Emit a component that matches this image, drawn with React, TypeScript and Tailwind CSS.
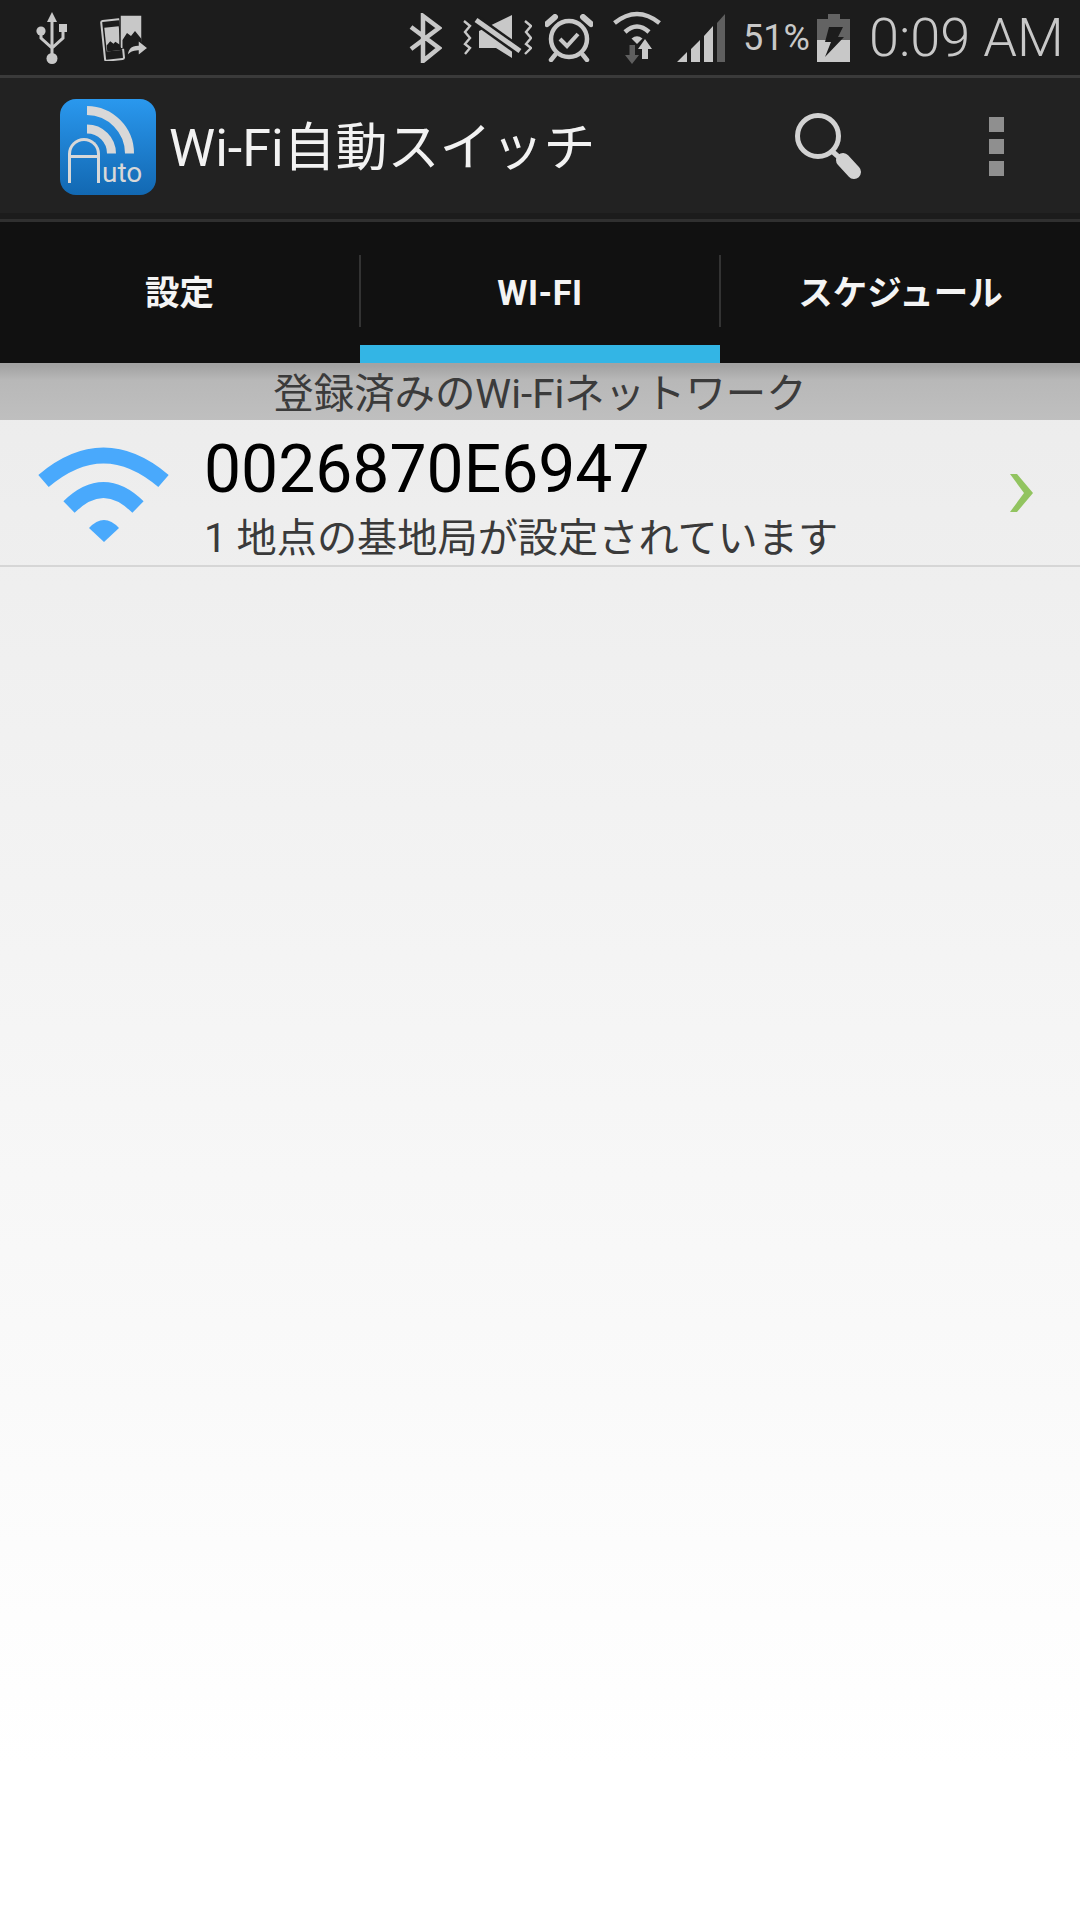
import React from "react";

// Android status bar glyphs
const UsbIcon = () => (
  <svg width="31" height="52" viewBox="0 0 31 52" fill="none">
    <path d="M16 0 L21 10 H11 Z" fill="#c8c8c8" />
    <path d="M16 9 V46 M5 19 V26 L16 36 L27 26 V19" stroke="#c8c8c8" strokeWidth="3" />
    <circle cx="16" cy="46.5" r="5.5" fill="#c8c8c8" />
    <circle cx="5" cy="19" r="4.6" fill="#c8c8c8" />
    <rect x="23" y="12" width="8" height="8" fill="#c8c8c8" />
  </svg>
);

const GalleryShareIcon = () => (
  <svg width="49" height="46" viewBox="0 0 49 46" fill="none">
    <g transform="rotate(-6 12 24)">
      <rect x="3" y="5" width="19" height="40" rx="1.5" stroke="#c8c8c8" strokeWidth="2" />
      <rect x="5.5" y="12" width="14.5" height="24" fill="#c8c8c8" />
      <path d="M6 30 L10 26 L13 29 L15 27 L20 31 V36 H6 Z" fill="#1c1c1c" />
    </g>
    <rect x="20" y="0" width="22" height="33" fill="#c8c8c8" stroke="#1c1c1c" strokeWidth="1.5" />
    <path d="M21 6 V33 H30 V25 H25 Z" fill="#c8c8c8" />
    <path d="M22.5 25 L27 18 L31 21 L35 16 L41.5 24 V33 H22.5 Z" fill="#1c1c1c" />
    <path
      d="M27 42 C27 33 32 30 38 30 V25 L48 33 L38 41 V36 C33 36 30 37 27 42 Z"
      fill="#c8c8c8"
      stroke="#1c1c1c"
      strokeWidth="1.5"
    />
  </svg>
);

const BluetoothIcon = () => (
  <svg width="34" height="50" viewBox="0 0 34 50" fill="none">
    <path d="M3 14 L31 35 L15 48 V3 L31 15 L3 36" stroke="#c8c8c8" strokeWidth="4.5" />
  </svg>
);

const VibrateOffIcon = () => (
  <svg width="69" height="47" viewBox="0 0 69 47" fill="none">
    <path d="M1 7 L7 12 L2 18 L7 24 L2 30 L7 34 L2 40" stroke="#c8c8c8" strokeWidth="2.4" />
    <path d="M62 7 L68 12 L63 18 L68 24 L63 30 L68 34 L62 40" stroke="#c8c8c8" strokeWidth="2.4" />
    <path d="M16 17 L49 1 V44 L33 34 H16 Z" fill="#c8c8c8" />
    <path d="M12 5 L58 38" stroke="#1c1c1c" strokeWidth="10" />
    <path d="M13 6 L57 37" stroke="#c8c8c8" strokeWidth="5" />
  </svg>
);

const AlarmIcon = () => (
  <svg width="48" height="48" viewBox="0 0 48 48" fill="none">
    <circle cx="24" cy="25" r="18" stroke="#c8c8c8" strokeWidth="4.5" />
    <path d="M15 25 L22 32 L33 20" stroke="#c8c8c8" strokeWidth="4" />
    <path d="M2 10 L10 3 M38 3 L46 10" stroke="#c8c8c8" strokeWidth="6" strokeLinecap="round" />
    <path d="M10 41 L6 46 M38 41 L42 46" stroke="#c8c8c8" strokeWidth="4.5" strokeLinecap="round" />
  </svg>
);

const WifiStatusIcon = () => (
  <svg width="50" height="53" viewBox="0 0 50 53" fill="none">
    <path d="M2.5 12 Q25 -6 47.5 12" stroke="#c8c8c8" strokeWidth="4.5" />
    <path d="M13 21 Q25 10 37 21" stroke="#c8c8c8" strokeWidth="4.5" />
    <path d="M19.5 27.5 Q25 23 30.5 27.5 L25 33 Z" fill="#c8c8c8" />
    <path d="M17.5 34 H23 V44 H27 L20 53 L13 44 H17.5 Z" fill="#5f5f5f" />
    <path d="M33 28 L40 38 H36 V48 H30 V38 H26 Z" fill="#c8c8c8" />
  </svg>
);

const SignalIcon = () => (
  <svg width="48" height="48" viewBox="0 0 48 48">
    <path d="M0 48 L10 38 V48 Z M14 48 V35 L23 26 V48 Z M27 48 V22 L36 12 V48 Z" fill="#c8c8c8" />
    <path d="M40 48 V9 L48 0 V48 Z" fill="#5f5f5f" />
  </svg>
);

const BatteryIcon = () => (
  <svg width="33" height="48" viewBox="0 0 33 48">
    <rect x="11" y="0" width="12" height="5" fill="#636363" />
    <rect x="0" y="5" width="33" height="21" fill="#636363" />
    <rect x="0" y="26" width="33" height="22" fill="#c8c8c8" />
    <path d="M12 13 H26 L21 23 H27 L8 43 L14 28 H8 Z" fill="#1c1c1c" />
  </svg>
);

// Launcher icon: signal arcs over an arch-shaped initial
const AppIcon = () => (
  <div
    role="img"
    aria-label="Auto"
    className="relative w-[96px] h-[96px] shrink-0 rounded-[16px] bg-linear-to-b from-[#2a98ee] to-[#1268b2] overflow-hidden"
  >
    <svg className="absolute inset-0" width="96" height="96" viewBox="0 0 96 96" fill="none">
      <path d="M27 11.5 A43 43 0 0 1 69.5 54.5" stroke="#d8d8d8" strokeWidth="9" />
      <path d="M27 30 A24.5 24.5 0 0 1 51.5 54.5" stroke="#d8d8d8" strokeWidth="9" />
    </svg>
    <div className="absolute left-[8px] top-[39px] w-[32px] h-[45px] rounded-t-[16px] border-x-[3px] border-t-[3px] border-[#d8d8d8]">
      <div className="mt-[14px] h-[3px] bg-[#d8d8d8]" />
    </div>
    <span className="absolute left-[42px] top-[56px] text-[28px] leading-[36px] text-[#d8d8d8]">uto</span>
  </div>
);

const SearchIcon = () => (
  <svg width="66" height="67" viewBox="0 0 66 67" fill="none">
    <circle cx="23" cy="24" r="20.5" stroke="#d2d2d2" strokeWidth="5" />
    <path d="M38 40 L46 47" stroke="#d2d2d2" strokeWidth="5" />
    <path d="M48 48 L59 60" stroke="#d2d2d2" strokeWidth="14" strokeLinecap="round" />
  </svg>
);

const WifiListIcon = () => (
  <svg className="blur-[0.7px]" width="131" height="95" viewBox="0 0 131 95" fill="none">
    <path d="M5.5 34 Q65.5 -17 125.5 34" stroke="#49a9fc" strokeWidth="16" />
    <path d="M31 60 Q65.5 26 100 60" stroke="#49a9fc" strokeWidth="16" />
    <path d="M51 81 Q66 65 81 81 L66 95 Z" fill="#49a9fc" />
  </svg>
);

const ChevronIcon = () => (
  <svg width="24" height="38" viewBox="0 0 24 38">
    <path d="M1 0 H8 L24 19 L8 38 H1 L15 19 Z" fill="#92c460" />
  </svg>
);

const TabDivider = () => <div className="w-[2px] h-[72px] mt-[33px] bg-[#333333] shrink-0" />;

export default function App() {
  return (
    <div className="w-[1080px] h-[1920px] flex flex-col overflow-hidden font-['Roboto','Noto_Sans_CJK_JP',sans-serif]">
      {/* Status bar */}
      <div className="h-[75px] bg-[#1c1c1c] flex items-center text-[#c8c8c8] shrink-0">
        <div className="ml-[36px]"><UsbIcon /></div>
        <div className="ml-[33px]"><GalleryShareIcon /></div>
        <div className="ml-[259px]"><BluetoothIcon /></div>
        <div className="ml-[21px]"><VibrateOffIcon /></div>
        <div className="ml-[13px]"><AlarmIcon /></div>
        <div className="ml-[19px]"><WifiStatusIcon /></div>
        <div className="ml-[15px]"><SignalIcon /></div>
        <span className="ml-[18px] text-[36px] leading-none w-[68px]">51%</span>
        <div className="ml-[6px]"><BatteryIcon /></div>
        <span className="ml-[19px] text-[54px] leading-none font-light whitespace-nowrap">0:09 AM</span>
      </div>
      <div className="h-[3px] bg-[#3a3a3a] shrink-0" />

      {/* Action bar */}
      <div className="h-[135px] bg-[#222222] flex items-center shrink-0">
        <div className="ml-[60px] mt-[2px]"><AppIcon /></div>
        <span className="ml-[13px] pt-[6px] text-[52px] leading-none text-[#f2f2f2] whitespace-nowrap">Wi-Fi自動スイッチ</span>
        <div className="ml-auto"><SearchIcon /></div>
        <div className="ml-[128px] mr-[76px] mt-[2px] flex flex-col gap-[7px]">
          <div className="w-[15px] h-[15px] bg-[#8f8f8f]" />
          <div className="w-[15px] h-[15px] bg-[#8f8f8f]" />
          <div className="w-[15px] h-[15px] bg-[#8f8f8f]" />
        </div>
      </div>
      <div className="h-[6px] bg-[#1c1c1c] shrink-0" />
      <div className="h-[3px] bg-[#303030] shrink-0" />

      {/* Tabs */}
      <div className="h-[141px] bg-[#111111] flex shrink-0 text-[#f4f4f4] text-[34.5px] font-bold">
        <div className="w-[359px] h-full pt-[2px] flex items-center justify-center">設定</div>
        <TabDivider />
        <div className="relative w-[358px] h-full pt-[2px] flex items-center justify-center tracking-[0.5px]">
          WI-FI
          {/* Selected tab indicator */}
          <div className="absolute left-[-1px] right-[-1px] bottom-0 h-[18px] bg-[#33b5e5]" />
        </div>
        <TabDivider />
        <div className="flex-1 h-full pt-[2px] flex items-center justify-center">スケジュール</div>
      </div>

      <div className="flex-1 flex flex-col bg-linear-to-b from-[#ececec] to-[#ffffff] to-90%">
        {/* Section header */}
        <div className="h-[57px] pt-[7px] bg-linear-to-b from-[#a3a3a3] from-5% via-[#b8b8b8] via-30% to-[#bfbfbf] flex items-center justify-center text-[40.4px] leading-none text-[#3b3b3b] shrink-0">
          登録済みのWi-Fiネットワーク
        </div>

        {/* Saved network row */}
        <div className="h-[147px] border-b-2 border-[#d6d6d6] flex items-center shrink-0">
          <div className="ml-[38px] mt-[4px]"><WifiListIcon /></div>
          <div className="ml-[35px] pt-[8px] flex flex-col">
            <span className="text-[66px] leading-[76px] text-black">0026870E6947</span>
            <span className="mt-[8px] text-[40.2px] leading-[46px] text-[#3a3a3a]">1 地点の基地局が設定されています</span>
          </div>
          <div className="ml-auto mr-[47px]"><ChevronIcon /></div>
        </div>
      </div>
    </div>
  );
}
